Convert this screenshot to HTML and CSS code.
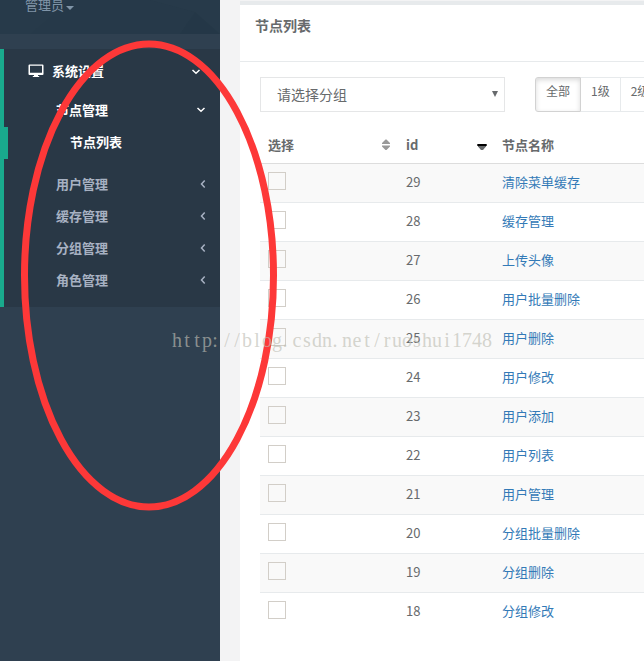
FILE: index.html
```html
<!DOCTYPE html>
<html lang="zh-CN">
<head>
<meta charset="utf-8">
<title>节点列表</title>
<link rel="stylesheet" href="styles.css">
</head>
<body>
<div class="layout">
  <nav class="sidebar">
    <div class="profile">
      <svg class="facets" width="220" height="34"><path d="M0 0H70L30 34H0zM150 0h70v34l-25-22z" fill="#2a3e4d" opacity=".3"/><path d="M195 12l25 22h-40z" fill="#223443" opacity=".3"/></svg>
      <span class="role">管理员</span><i class="caret"></i>
    </div>
    <div class="menu">
      <div class="item top">
        <svg class="monitor" width="16" height="14" viewBox="0 0 16 14"><path fill="#fff" fill-rule="evenodd" d="M1.500.5h13q1 0 1 1v8.500q0 1-1 1H10v1h1.200v1H4.800v-1H6v-1H1.500q-1 0-1-1V1.500q0-1 1-1zM2 1.700V8.700h12V1.700z"/></svg>
        <span>系统设置</span>
        <svg class="arrow" width="10" height="8" viewBox="0 0 10 8"><path d="M1.500 2l3.500 3.300L8.500 2"/></svg>
      </div>
      <div class="item second open"><span>节点管理</span><svg class="arrow" width="10" height="8" viewBox="0 0 10 8"><path d="M1.500 2l3.500 3.300L8.500 2"/></svg></div>
      <div class="item third"><span>节点列表</span></div>
      <div class="item second"><span>用户管理</span><svg class="arrow" width="6" height="10" viewBox="0 0 6 10"><path d="M4.700 1.500L1.500 5l3.200 3.500"/></svg></div>
      <div class="item second"><span>缓存管理</span><svg class="arrow" width="6" height="10" viewBox="0 0 6 10"><path d="M4.700 1.500L1.500 5l3.200 3.500"/></svg></div>
      <div class="item second"><span>分组管理</span><svg class="arrow" width="6" height="10" viewBox="0 0 6 10"><path d="M4.700 1.500L1.500 5l3.200 3.500"/></svg></div>
      <div class="item second"><span>角色管理</span><svg class="arrow" width="6" height="10" viewBox="0 0 6 10"><path d="M4.700 1.500L1.500 5l3.200 3.500"/></svg></div>
    </div>
  </nav>
  <main class="panel">
    <h5 class="title">节点列表</h5>
    <div class="content">
      <div class="filters">
        <div class="select"><span>请选择分组</span><i class="down"></i></div>
        <div class="levels"><span class="level active">全部</span><span class="level">1级</span><span class="level">2级</span></div>
      </div>
      <div class="row head">
        <div class="c1"><span>选择</span><svg width="10" height="12" viewBox="0 0 10 12"><path fill="#999" d="M4.500.5h1L9 4v1H1V4zM1 6.500h8v1L5.500 11h-1L1 7.500z"/></svg></div>
        <div class="c2"><span>id</span><svg width="10" height="12" viewBox="0 0 10 12"><path fill="#676a6c" d="M1 6h8v1.500L6 11H4L1 7.500z"/><path fill="#000" d="M.3 5h9.400v2H.3z"/></svg></div>
        <div>节点名称</div>
      </div>
      <div class="row"><div class="c1"><i class="box"></i></div><div class="c2">29</div><a>清除菜单缓存</a></div>
      <div class="row"><div class="c1"><i class="box"></i></div><div class="c2">28</div><a>缓存管理</a></div>
      <div class="row"><div class="c1"><i class="box"></i></div><div class="c2">27</div><a>上传头像</a></div>
      <div class="row"><div class="c1"><i class="box"></i></div><div class="c2">26</div><a>用户批量删除</a></div>
      <div class="row"><div class="c1"><i class="box"></i></div><div class="c2">25</div><a>用户删除</a></div>
      <div class="row"><div class="c1"><i class="box"></i></div><div class="c2">24</div><a>用户修改</a></div>
      <div class="row"><div class="c1"><i class="box"></i></div><div class="c2">23</div><a>用户添加</a></div>
      <div class="row"><div class="c1"><i class="box"></i></div><div class="c2">22</div><a>用户列表</a></div>
      <div class="row"><div class="c1"><i class="box"></i></div><div class="c2">21</div><a>用户管理</a></div>
      <div class="row"><div class="c1"><i class="box"></i></div><div class="c2">20</div><a>分组批量删除</a></div>
      <div class="row"><div class="c1"><i class="box"></i></div><div class="c2">19</div><a>分组删除</a></div>
      <div class="row"><div class="c1"><i class="box"></i></div><div class="c2">18</div><a>分组修改</a></div>
    </div>
  </main>
</div>
<svg class="ring" width="644" height="661"><ellipse cx="149" cy="275.500" rx="124.500" ry="231.500" fill="none" stroke="#fd3838" stroke-width="7"/></svg>
<svg class="watermark" width="320" height="28"><text y="19" x="5 15 25 35 43 55 65 75 85 95 105 113 125 135 145 155 163 175 185 195 205 215 225 235 245 255 265 275 285 295 305 315">http://blog.csdn.net/ruoshui1748</text></svg>
</body>
</html>
```
FILE: styles.css
```css
* { box-sizing: border-box; }
body { margin: 0; height: 661px; overflow: hidden; position: relative; background: #f3f3f4; color: #676a6c; font: 13px/18px "Noto Sans CJK SC", sans-serif; }
.layout { display: flex; width: 644px; height: 661px; }
.sidebar { width: 220px; flex: none; margin-right: 20px; background: #2f4050; color: #a7b1c2; font-weight: bold; }
.profile { position: relative; height: 34px; margin-bottom: 15px; padding-left: 25px; background: #263949; color: #8095a8; font-weight: normal; display: flex; }
.facets { position: absolute; left: 0; top: 0; }
.role { position: relative; line-height: 18px; margin-top: -4px; }
.caret { position: relative; border: 4px solid transparent; border-top-color: #8095a8; border-bottom: 0; height: 4px; margin: 6px 0 0 2px; }
.menu { height: 258px; border-left: 4px solid #19aa8d; background: #293846; padding-top: 6px; }
.item { display: flex; align-items: center; height: 32px; }
.top { height: 34px; color: #fff; padding: 0 19px 0 24px; margin-bottom: 5px; }
.monitor { margin: -2px 8px 0 0; }
.second { padding: 0 14px 0 52px; }
.open { color: #fff; }
.third { color: #fff; margin: 1px 0 9px -4px; border-left: 8px solid #19aa8d; padding-left: 62px; }
.item span { position: relative; top: 0; }
.top span, .third span { top: -1px; }
.arrow { margin-left: auto; fill: none; stroke: currentColor; stroke-width: 1.5; }
.panel { width: 404px; height: 661px; background: #fff; border-top: 1px solid #f3f3f4; box-shadow: inset 0 4px #e7eaec; overflow: hidden; }
.title { margin: 0; height: 61px; padding: 15px; border-bottom: 1px solid #e7eaec; font-size: 14px; line-height: 18px; }
.content { width: 480px; padding: 15px 20px; }
.filters { display: flex; gap: 30px; height: 35px; margin-bottom: 16px; }
.select { width: 245px; border: 1px solid #e5e6e7; padding: 0 6px 0 16px; display: flex; align-items: center; justify-content: space-between; font-size: 14px; line-height: 18px; }
.select span { margin-top: -1px; }
.down { border: 3.500px solid transparent; border-top: 6px solid #676a6c; border-bottom: 0; margin-top: -2px; }
.levels { display: flex; font-size: 12px; }
.level { border: 1px solid #e7eaec; border-left: 0; padding: 4px 10px; height: 35px; }
.active { width: 46px; border: 1px solid #d2d2d2; border-radius: 3px 0 0 3px; box-shadow: inset 0 2px 5px rgba(0,0,0,.15); }
.row { display: flex; height: 39px; padding: 9px 8px; border-top: 1px solid #e7eaec; }
.row:nth-child(odd) { background: #f9f9f9; }
.head { height: 35px; border: 0; font-weight: bold; padding-top: 8px; }
.row.head { background: #fff; }
.head + .row { border-top-color: #ddd; }
.c1 { width: 138px; }
.c2 { width: 96px; }
.head .c1, .head .c2 { display: flex; justify-content: space-between; align-items: center; padding-right: 15px; height: 18px; }
.box { display: block; width: 18px; height: 18px; margin-top: -1px; border: 1px solid #d2cec8; }
a { color: #337ab7; }
.ring { position: absolute; left: 0; top: 0; }
.watermark { position: absolute; left: 172px; top: 328px; font: 20px "Liberation Serif", serif; fill: rgba(190,190,180,.65); text-anchor: middle; }
```
